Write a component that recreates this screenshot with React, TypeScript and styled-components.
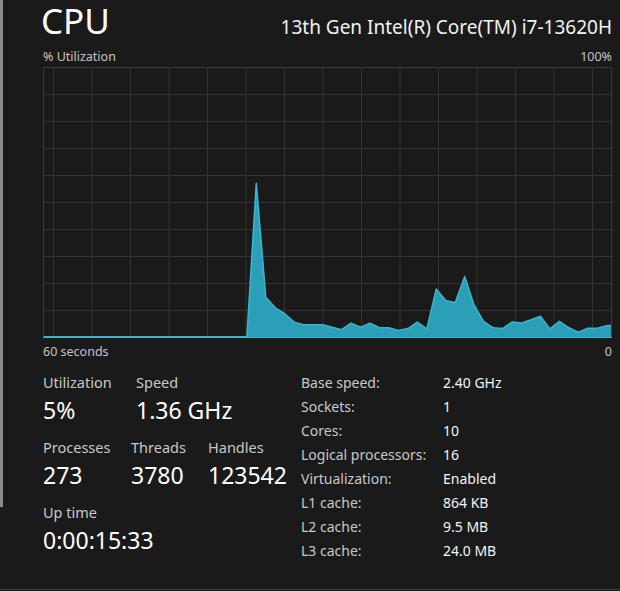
import React from "react";
import styled, { createGlobalStyle } from "styled-components";

const Global = createGlobalStyle`
  html, body { margin: 0; padding: 0; background: #1a1a1a; }
  * { box-sizing: border-box; }
`;

const FONT = `"Noto Sans", "Open Sans", "Liberation Sans", sans-serif`;

const Page = styled.div`
  display: flex;
  width: 620px;
  height: 590px;
  background: #1a1a1a;
  border-bottom: 1px solid #3d3d3d;
  font-family: ${FONT};
  color: #ffffff;
  overflow: hidden;
`;

const Rail = styled.div`
  flex-shrink: 0;
  width: 3px;
  height: 507px;
  background: #8a8a8a;
`;

const Main = styled.div`
  flex: 1;
  display: flex;
  flex-direction: column;
  padding: 0 8px 0 40px;
`;

const Header = styled.div`
  display: flex;
  justify-content: space-between;
  align-items: baseline;
  height: 45px;
`;

const Title = styled.div`
  font-size: 35px;
  line-height: 41px;
  font-weight: 400;
  margin-left: -2px;
`;

const Model = styled.div`
  font-size: 19px;
  line-height: 41px;
  color: #f2f2f2;
`;

const AxisRow = styled.div<{ $h: number }>`
  display: flex;
  justify-content: space-between;
  align-items: center;
  height: ${(p) => p.$h}px;
  font-size: 12.5px;
  color: #c4c4c4;
`;

const ChartSvg = styled.svg`
  display: block;
  width: 569px;
  height: 271px;
`;

const Stats = styled.div`
  display: flex;
  margin-top: 6px;
`;

const LeftStats = styled.div`
  width: 258px;
  display: flex;
  flex-direction: column;
`;

const StatRow = styled.div`
  display: flex;
  height: 65px;
`;

const StatCell = styled.div<{ $w?: number }>`
  width: ${(p) => (p.$w ? `${p.$w}px` : "auto")};
  display: flex;
  flex-direction: column;
`;

const StatLabel = styled.div`
  font-size: 14.5px;
  line-height: 24px;
  color: #c8c8c8;
  white-space: nowrap;
`;

const StatValue = styled.div`
  font-size: 23px;
  line-height: 33px;
  color: #ffffff;
  white-space: nowrap;
`;

const Table = styled.div`
  display: grid;
  grid-template-columns: 142px auto;
  grid-auto-rows: 24px;
  align-items: center;
  font-size: 14px;
`;

const TKey = styled.div`
  color: #c8c8c8;
  white-space: nowrap;
`;

const TVal = styled.div`
  color: #f4f4f4;
  white-space: nowrap;
`;

const values: number[] = [
  ...Array(22).fill(0),
  57.1, 14.9, 11.0, 8.8, 5.7, 4.7, 4.7, 4.7, 3.8, 2.9,
  5.3, 3.8, 5.3, 3.6, 3.6, 2.6, 3.3, 5.7, 3.2, 18.0,
  13.7, 12.9, 22.6, 11.9, 6.0, 3.6, 3.3, 5.7, 5.4, 6.6,
  7.9, 3.2, 6.0, 3.6, 2.0, 3.4, 3.4, 4.4,
];

const W = 568;
const H = 270;

function Chart() {
  const yOf = (v: number) => H + 0.5 - v * 2.7 - (v === 0 ? 0.8 : 0);
  const pts: [number, number][] = [[0, yOf(0)]];
  values.forEach((v, k) => pts.push([5 + k * 9.47, yOf(v)]));
  pts.push([W, yOf(values[values.length - 1])]);
  const line = pts.map(([x, y]) => `${x.toFixed(1)},${y.toFixed(1)}`).join(" ");
  const fill = `0.5,${H + 0.5} ${line} ${W},${H + 0.5}`;
  const vLines: number[] = [];
  for (let x = 10.5; x < W; x += 38.5) vLines.push(x);
  const hLines: number[] = [];
  for (let i = 1; i < 10; i++) hLines.push(0.5 + i * 27);
  return (
    <ChartSvg viewBox="0 0 569 271">
      {vLines.map((x) => (
        <line key={`v${x}`} x1={x} y1={0} x2={x} y2={H} stroke="#333333" strokeWidth={1} />
      ))}
      {hLines.map((y) => (
        <line key={`h${y}`} x1={0} y1={y} x2={W} y2={y} stroke="#333333" strokeWidth={1} />
      ))}
      <polygon points={fill} fill="#2b9fb7" />
      <polyline points={line} fill="none" stroke="#3bb4cd" strokeWidth={1.5} strokeLinejoin="round" />
      <rect x={0.5} y={0.5} width={W} height={H} fill="none" stroke="#3a3a3a" strokeWidth={1} />
      <line x1={0} y1={H + 0.5} x2={W + 1} y2={H + 0.5} stroke="#3bb4cd" strokeWidth={1} />
    </ChartSvg>
  );
}

const specs: [string, string][] = [
  ["Base speed:", "2.40 GHz"],
  ["Sockets:", "1"],
  ["Cores:", "10"],
  ["Logical processors:", "16"],
  ["Virtualization:", "Enabled"],
  ["L1 cache:", "864 KB"],
  ["L2 cache:", "9.5 MB"],
  ["L3 cache:", "24.0 MB"],
];

export default function App() {
  return (
    <>
      <Global />
      <Page>
        <Rail />
        <Main>
          <Header>
            <Title>CPU</Title>
            <Model>13th Gen Intel(R) Core(TM) i7-13620H</Model>
          </Header>
          <AxisRow $h={22}>
            <span>% Utilization</span>
            <span>100%</span>
          </AxisRow>
          <Chart />
          <AxisRow $h={26}>
            <span>60 seconds</span>
            <span>0</span>
          </AxisRow>
          <Stats>
            <LeftStats>
              <StatRow>
                <StatCell $w={93}>
                  <StatLabel>Utilization</StatLabel>
                  <StatValue>5%</StatValue>
                </StatCell>
                <StatCell>
                  <StatLabel>Speed</StatLabel>
                  <StatValue>1.36 GHz</StatValue>
                </StatCell>
              </StatRow>
              <StatRow>
                <StatCell $w={88}>
                  <StatLabel>Processes</StatLabel>
                  <StatValue>273</StatValue>
                </StatCell>
                <StatCell $w={77}>
                  <StatLabel>Threads</StatLabel>
                  <StatValue>3780</StatValue>
                </StatCell>
                <StatCell>
                  <StatLabel>Handles</StatLabel>
                  <StatValue>123542</StatValue>
                </StatCell>
              </StatRow>
              <StatRow>
                <StatCell>
                  <StatLabel>Up time</StatLabel>
                  <StatValue>0:00:15:33</StatValue>
                </StatCell>
              </StatRow>
            </LeftStats>
            <Table>
              {specs.map(([k, v]) => (
                <React.Fragment key={k}>
                  <TKey>{k}</TKey>
                  <TVal>{v}</TVal>
                </React.Fragment>
              ))}
            </Table>
          </Stats>
        </Main>
      </Page>
    </>
  );
}
